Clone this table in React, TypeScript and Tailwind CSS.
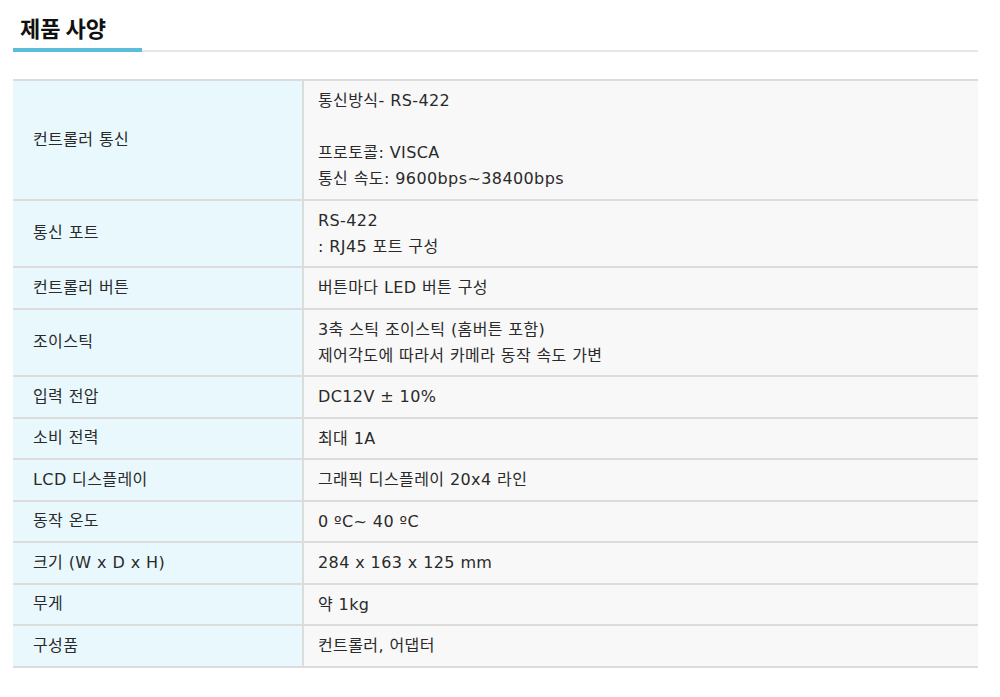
import React from "react";

const rows: { label: string; lines: string[] }[] = [
  { label: "컨트롤러 통신", lines: ["통신방식- RS-422", "", "프로토콜: VISCA", "통신 속도: 9600bps~38400bps"] },
  { label: "통신 포트", lines: ["RS-422", ": RJ45 포트 구성"] },
  { label: "컨트롤러 버튼", lines: ["버튼마다 LED 버튼 구성"] },
  { label: "조이스틱", lines: ["3축 스틱 조이스틱 (홈버튼 포함)", "제어각도에 따라서 카메라 동작 속도 가변"] },
  { label: "입력 전압", lines: ["DC12V ± 10%"] },
  { label: "소비 전력", lines: ["최대 1A"] },
  { label: "LCD 디스플레이", lines: ["그래픽 디스플레이 20x4 라인"] },
  { label: "동작 온도", lines: ["0 ºC~ 40 ºC"] },
  { label: "크기 (W x D x H)", lines: ["284 x 163 x 125 mm"] },
  { label: "무게", lines: ["약 1kg"] },
  { label: "구성품", lines: ["컨트롤러, 어댑터"] },
];

export default function App() {
  return (
    <div className="w-[1000px] h-[697px] bg-white pl-[13px] pr-[22px] pt-[13px]">
      <div className="pl-[7px] text-[22px] font-bold leading-[28px] text-[#111] [font-family:'Noto_Sans_CJK_KR',sans-serif]">
        제품 사양
      </div>
      <div className="relative mt-[7px] h-[4px]">
        <div className="absolute left-0 right-0 top-[2px] h-[2px] bg-[#e6e6e6]" />
        <div className="absolute left-0 top-0 h-[4px] w-[129px] bg-[#5bbcdc]" />
      </div>
      <div className="mt-[27px] border-t-2 border-[#dcdcdc] text-[16px] tracking-[0.4px] text-[#2a2a2a] [font-family:'DejaVu_Sans','Noto_Sans_CJK_KR',sans-serif]">
        {rows.map((r, i) => (
          <div key={i} className="flex border-b-2 border-[#dcdcdc]">
            <div className="w-[291px] shrink-0 flex items-center bg-[#e8f8fd] pl-[20px] border-r-2 border-[#dcdcdc] leading-[26px]">
              {r.label}
            </div>
            <div className="flex-1 bg-[#f8f8f8] pl-[14px] pt-[7px] pb-[6.5px] leading-[26px]">
              {r.lines.map((l, j) => (
                <div key={j} className="h-[26px]">{l}</div>
              ))}
            </div>
          </div>
        ))}
      </div>
    </div>
  );
}
